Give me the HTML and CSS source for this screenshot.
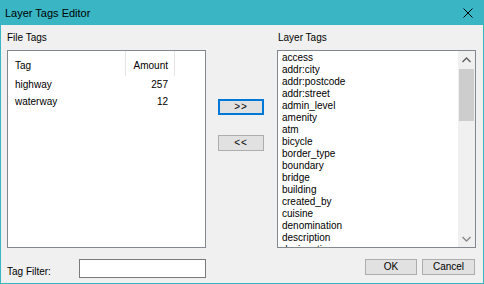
FILE: index.html
```html
<!DOCTYPE html>
<html>
<head>
    <link rel="stylesheet" href="styles.css">
</head>
<body>
    <div class="window">
        <div class="titlebar">
            <span class="title">Layer Tags Editor</span>
            <svg class="close" width="10" height="10" viewBox="0 0 10 10">
                <path d="M0.5 0.5 L9.5 9.5 M9.5 0.5 L0.5 9.5" stroke="#000" stroke-width="1" fill="none"/>
            </svg>
        </div>

        <div class="main">
            <!-- File tags -->
            <div class="panel">
                <div class="label">File Tags</div>
                <div class="listview">
                    <div class="lv-head">
                        <div class="col-tag">Tag</div>
                        <div class="col-amount">Amount</div>
                    </div>
                    <div class="lv-row">
                        <div class="cell-tag">highway</div>
                        <div class="cell-amount">257</div>
                    </div>
                    <div class="lv-row">
                        <div class="cell-tag">waterway</div>
                        <div class="cell-amount">12</div>
                    </div>
                </div>
            </div>

            <div class="mover">
                <button class="btn btn-focus">&gt;&gt;</button>
                <button class="btn">&lt;&lt;</button>
            </div>

            <!-- Layer tags -->
            <div class="panel panel-right">
                <div class="label">Layer Tags</div>
                <div class="listbox">
                    <div class="items">
                        <div class="item">access</div>
                        <div class="item">addr:city</div>
                        <div class="item">addr:postcode</div>
                        <div class="item">addr:street</div>
                        <div class="item">admin_level</div>
                        <div class="item">amenity</div>
                        <div class="item">atm</div>
                        <div class="item">bicycle</div>
                        <div class="item">border_type</div>
                        <div class="item">boundary</div>
                        <div class="item">bridge</div>
                        <div class="item">building</div>
                        <div class="item">created_by</div>
                        <div class="item">cuisine</div>
                        <div class="item">denomination</div>
                        <div class="item">description</div>
                        <div class="item">designation</div>
                    </div>
                    <div class="scrollbar">
                        <div class="sb-btn">
                            <svg width="9" height="6" viewBox="0 0 9 6"><path d="M0.5 5 L4.5 1 L8.5 5" stroke="#606060" stroke-width="1.4" fill="none"/></svg>
                        </div>
                        <div class="sb-track">
                            <div class="sb-thumb"></div>
                        </div>
                        <div class="sb-btn">
                            <svg width="9" height="6" viewBox="0 0 9 6"><path d="M0.5 1 L4.5 5 L8.5 1" stroke="#8a8a8a" stroke-width="1.4" fill="none"/></svg>
                        </div>
                    </div>
                </div>
            </div>
        </div>

        <div class="footer">
            <div class="filter">
                <span class="filter-label">Tag Filter:</span>
                <input class="filter-input" type="text">
            </div>
            <div class="actions">
                <button class="btn btn-ok">OK</button>
                <button class="btn btn-cancel">Cancel</button>
            </div>
        </div>
    </div>
</body>
</html>
```

FILE: styles.css
```css
* {
    box-sizing: border-box;
}

body {
    margin: 0;
    font-family: "Liberation Sans", Arial, sans-serif;
    font-size: 10px;
    color: #000;
}

.window {
    width: 484px;
    height: 284px;
    background: #f0f0f0;
    border: 1px solid #3ab5c4;
    border-top: 0;
    display: flex;
    flex-direction: column;
}

.titlebar {
    height: 25px;
    margin: 0 -1px;
    padding: 0 11px 0 5px;
    background: #3ab5c4;
    display: flex;
    align-items: center;
    justify-content: space-between;
    font-size: 11px;
}

.close {
    display: block;
}

.main {
    display: flex;
    padding: 6px 0 0 6px;
}

.panel {
    width: 199px;
    display: flex;
    flex-direction: column;
}

.panel-right {
    margin-left: 13px;
}

.panel-right .label {
    padding-left: 1px;
}

.label {
    height: 14px;
    line-height: 14px;
    margin-bottom: 5px;
}

.listview {
    height: 198px;
    background: #fff;
    border: 1px solid #828790;
}

.lv-head {
    display: flex;
    height: 25px;
}

.col-tag,
.col-amount {
    padding-top: 8px;
    line-height: 14px;
    border-right: 1px solid #e5e5e5;
}

.col-tag,
.cell-tag {
    width: 118px;
    padding-left: 7px;
}

.col-amount,
.cell-amount {
    width: 49px;
    text-align: right;
}

.col-amount {
    padding-right: 6px;
}

.lv-row {
    display: flex;
    height: 17px;
    line-height: 17px;
}

.cell-amount {
    padding-right: 7px;
}

.mover {
    width: 46px;
    margin-left: 12px;
    padding-top: 68px;
    display: flex;
    flex-direction: column;
    gap: 20px;
}

.btn {
    height: 16px;
    padding: 0;
    background: #e1e1e1;
    border: 1px solid #adadad;
    font-family: inherit;
    font-size: 10px;
    color: #000;
    line-height: 12px;
}

.mover .btn {
    width: 46px;
    letter-spacing: 1px;
}

.btn-focus {
    border: 2px solid #0078d7;
}

.listbox {
    height: 198px;
    background: #fff;
    border: 1px solid #828790;
    display: flex;
    overflow: hidden;
}

.items {
    flex: 1;
    padding: 1px 0 0 4px;
    overflow: hidden;
}

.item {
    height: 12px;
    line-height: 12px;
    white-space: nowrap;
}

.scrollbar {
    width: 17px;
    background: #f0f0f0;
    display: flex;
    flex-direction: column;
}

.sb-btn {
    height: 17px;
    display: flex;
    align-items: center;
    justify-content: center;
}

.sb-btn svg {
    display: block;
}

.sb-track {
    flex: 1;
    padding: 1px 1px 0;
}

.sb-thumb {
    height: 52px;
    background: #cdcdcd;
}

.footer {
    display: flex;
    padding: 11px 8px 0 6px;
}

.filter {
    width: 199px;
    display: flex;
}

.filter-label {
    padding-top: 6px;
    line-height: 14px;
}

.filter-input {
    width: 127px;
    height: 19px;
    margin: 0 0 0 auto;
    border: 1px solid #7a7a7a;
    background: #fff;
    padding: 0 3px;
}

.actions {
    margin-left: auto;
    display: flex;
    gap: 5px;
}

.btn-ok {
    width: 52px;
}

.btn-cancel {
    width: 53px;
}
```
